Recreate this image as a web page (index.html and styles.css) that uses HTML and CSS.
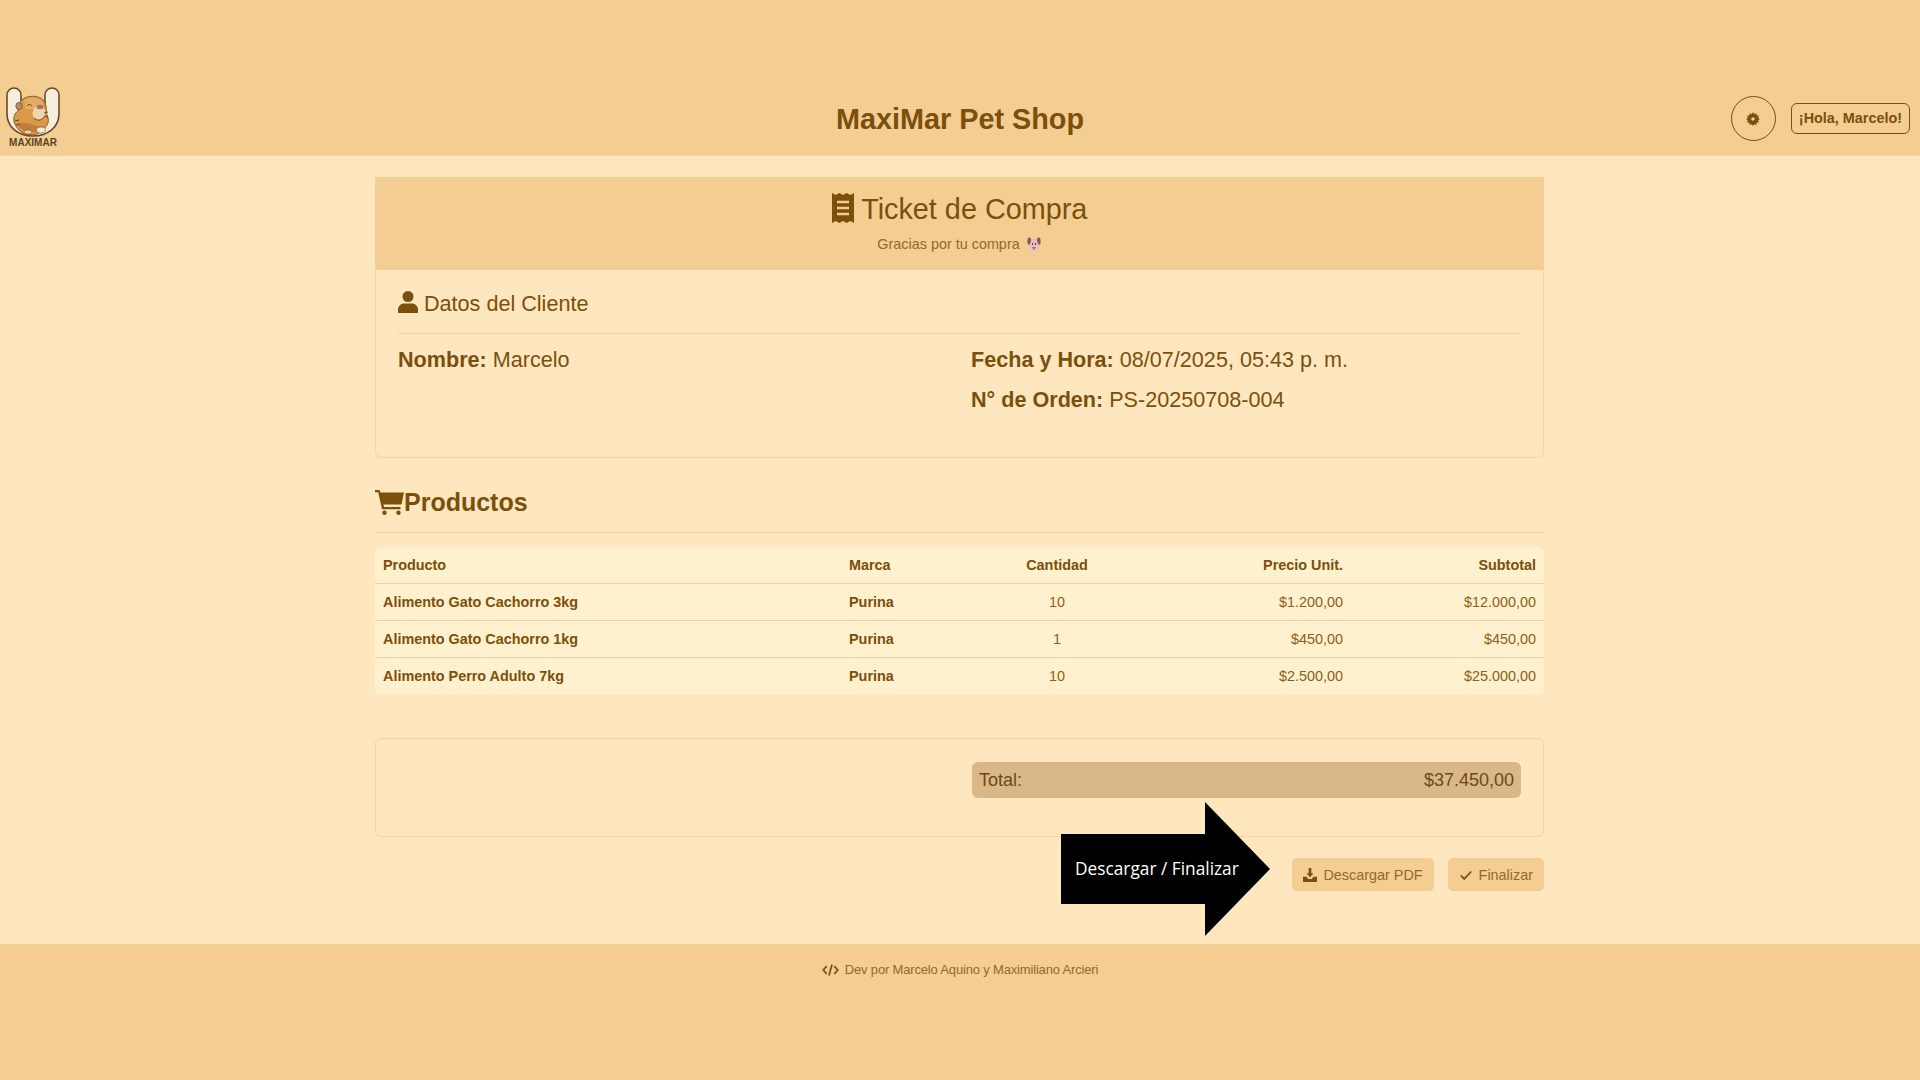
FILE: index.html
```html
<!DOCTYPE html>
<html lang="es">
<head>
  <meta charset="UTF-8" />
  <meta name="viewport" content="width=device-width, initial-scale=1.0"/>
  <title>Ticket de Compra</title>
  <link rel="stylesheet" href="styles.css">
</head>
<body>
  <header class="topbar">
    <div class="brand">
      <svg class="brand-logo" viewBox="0 0 54 51">
        <!-- U -->
        <path d="M1 9a7 7 0 0 1 14 0v14c0 7 5 11 12 11s12-4 12-11V9a7 7 0 0 1 14 0v19c0 13-11 22-26 22S1 41 1 28z" fill="#f7efde" stroke="#6b4a26" stroke-width="1.600"/>
        <!-- capybara -->
        <path d="M8 36c-1-5 1-9 4-11 0-6 2-11 7-13 6-3 14-2 18 2 3 3 4 8 3 13 2 3 3 7 2 10-3 7-10 12-17 12-8 0-14-5-17-13z" fill="#d99a4c" stroke="#7a5424" stroke-width=".9"/>
        <path d="M11 38c3 5 7 8 14 8s10-2 13-6c-4 1-7 0-10-1-6-2-11-3-17-1z" fill="#c0803a"/>
        <path d="M19 13c6-3 12-2 16 1 2 3 3 6 2 9H20c-2-3-2-7-1-10z" fill="#e4ac64"/>
        <ellipse cx="13" cy="20" rx="3.200" ry="3.600" fill="#b98873" stroke="#7a5424" stroke-width=".8"/>
        <ellipse cx="33" cy="27" rx="6.500" ry="7" fill="#f1d3ac"/>
        <ellipse cx="34" cy="21" rx="3.400" ry="2.200" fill="#a7736c"/>
        <path d="M21 20c1-2 3-2 5 0M28 32c3 3 7 3 10-1M9 35l4-1M10 39l4-1M38 27l4-1M38 30l4 1" fill="none" stroke="#5b3a16" stroke-width=".9"/>
        <ellipse cx="35" cy="44" rx="4.500" ry="3" fill="#f6ead6" stroke="#7a5424" stroke-width=".6"/>
        <ellipse cx="22" cy="46" rx="4" ry="2" fill="#edd3aa" stroke="#7a5424" stroke-width=".6"/>
      </svg>
      <span class="brand-name">MAXIMAR</span>
    </div>
    <h1 class="site-title">MaxiMar Pet Shop</h1>
    <div class="topbar-actions">
      <button class="theme-btn" type="button" aria-label="Tema">
        <svg viewBox="0 0 16 16" class="icon-gear">
          <path d="M8 0l1.300 2.300 2.500-.9.4 2.600 2.600.4-.9 2.500L16 8l-2.100 1.300.9 2.500-2.600.4-.4 2.600-2.500-.9L8 16l-1.300-2.100-2.500.9-.4-2.600-2.600-.4.9-2.500L0 8l2.100-1.100-.9-2.500L3.800 4l.4-2.600 2.500.9z"/>
          <circle cx="8" cy="8" r="2" fill="#f3cd92"/>
        </svg>
      </button>
      <div class="greeting">¡Hola, Marcelo!</div>
    </div>
  </header>

  <main class="ticket">
    <section class="ticket-head">
      <h2>
        <svg class="icon-receipt" viewBox="0 0 22 30">
          <path d="M0 0l3.700 2L7.300 0 11 2l3.700-2 3.600 2L22 0v30l-3.700-2-3.600 2L11 28l-3.700 2-3.600-2L0 30z"/>
          <path d="M5 9h12M5 15h12M5 21h12" stroke="#f3cd92" stroke-width="2.400"/>
        </svg>
        Ticket de Compra
      </h2>
      <p>Gracias por tu compra
        <svg class="icon-dog" viewBox="0 0 16 16">
          <path d="M2 2c2-1 3 0 4 1h4c1-1 2-2 4-1 1 3 1 6-1 7 0 4-3 6-5 6s-5-2-5-6C1 8 1 5 2 2z" fill="#e8bfc0"/>
          <path d="M2 2c2-1 3 0 3 2 0 2-1 4-2 5C1 8 1 5 2 2zM14 2c-2-1-3 0-3 2 0 2 1 4 2 5 2-1 2-4 1-7z" fill="#8a5a52"/>
          <path d="M6 7h1v2H6zM9 7h1v2H9z" fill="#5a3a36"/>
          <path d="M6 11h4l-2 3z" fill="#c2556d"/>
        </svg>
      </p>
    </section>

    <section class="client-card">
      <h3 class="client-title">
        <svg class="icon-user" viewBox="0 0 20 22">
          <circle cx="10" cy="5.500" r="5.500"/>
          <path d="M0 22v-3c0-4 3-6.500 6-6.500h8c3 0 6 2.500 6 6.500v3z"/>
        </svg>
        Datos del Cliente
      </h3>
      <div class="client-grid">
        <div>
          <p><strong>Nombre:</strong> Marcelo</p>
        </div>
        <div>
          <p><strong>Fecha y Hora:</strong> 08/07/2025, 05:43 p. m.</p>
          <p><strong>N° de Orden:</strong> PS-20250708-004</p>
        </div>
      </div>
    </section>

    <h3 class="products-title">
      <svg class="icon-cart" viewBox="0 0 29 25">
        <path d="M0 0h4.500l1 2.500H29l-2.500 12H8.500l.5 2.500h16.500v2.200H7L3.200 2.200H0z"/>
        <circle cx="9.500" cy="22.800" r="2.200"/>
        <circle cx="23.500" cy="22.800" r="2.200"/>
      </svg>
      Productos
    </h3>

    <div class="table-wrap">
      <table class="products">
        <thead>
          <tr>
            <th class="col-name">Producto</th>
            <th class="col-brand">Marca</th>
            <th class="col-qty">Cantidad</th>
            <th class="col-price">Precio Unit.</th>
            <th class="col-sub">Subtotal</th>
          </tr>
        </thead>
        <tbody>
          <tr>
            <td class="col-name">Alimento Gato Cachorro 3kg</td>
            <td class="col-brand">Purina</td>
            <td class="col-qty">10</td>
            <td class="col-price">$1.200,00</td>
            <td class="col-sub">$12.000,00</td>
          </tr>
          <tr>
            <td class="col-name">Alimento Gato Cachorro 1kg</td>
            <td class="col-brand">Purina</td>
            <td class="col-qty">1</td>
            <td class="col-price">$450,00</td>
            <td class="col-sub">$450,00</td>
          </tr>
          <tr>
            <td class="col-name">Alimento Perro Adulto 7kg</td>
            <td class="col-brand">Purina</td>
            <td class="col-qty">10</td>
            <td class="col-price">$2.500,00</td>
            <td class="col-sub">$25.000,00</td>
          </tr>
        </tbody>
      </table>
    </div>

    <section class="total-card">
      <div class="total-row">
        <span>Total:</span>
        <span>$37.450,00</span>
      </div>
    </section>

    <div class="actions">
      <button class="btn" type="button">
        <svg class="icon-btn" viewBox="0 0 16 16">
          <path d="M6.500 0h3v6H12L8 10.500 4 6h2.500z"/>
          <path d="M0 10h4l2 2.500h4L12 10h4v6H0z"/>
        </svg>
        Descargar PDF
      </button>
      <button class="btn" type="button">
        <svg class="icon-btn" viewBox="0 0 16 16">
          <path d="M2 8.500l4 4 8-8.500" fill="none" stroke="currentColor" stroke-width="2"/>
        </svg>
        Finalizar
      </button>
    </div>
  </main>

  <footer class="footer">
    <svg class="icon-code" viewBox="0 0 20 14">
      <path d="M5.500 2.500L1.500 7l4 4.500M14.500 2.500l4 4.500-4 4.500M11.800 .5L8.200 13.500" fill="none" stroke="currentColor" stroke-width="2"/>
    </svg>
    Dev por Marcelo Aquino y Maximiliano Arcieri
  </footer>

  <div class="callout">
    <span>Descargar / Finalizar</span>
  </div>
</body>
</html>
```

FILE: styles.css
```css
* {
  box-sizing: border-box;
}

body {
  font-family: 'Liberation Sans', Arial, sans-serif;
  background: #fee7bf;
  margin: 0;
  height: 1080px;
  display: flex;
  flex-direction: column;
  color: #7b4f0c;
  position: relative;
  overflow: hidden;
}

/* top bar */
.topbar {
  height: 156px;
  background: #f3cd92;
  border-bottom: 1px solid #f0d6a8;
  display: flex;
  align-items: flex-end;
  justify-content: space-between;
  padding: 0 10px 7px 6px;
  position: relative;
}

.brand {
  width: 54px;
  display: flex;
  flex-direction: column;
  align-items: center;
}

.brand-logo {
  width: 54px;
  height: 51px;
  display: block;
}

.brand-name {
  font-size: 10px;
  line-height: 10px;
  font-weight: 700;
  color: #5b4426;
  margin-top: 1px;
}

.site-title {
  margin: 0;
  font-size: 28.8px;
  font-weight: 700;
  line-height: 34px;
  position: absolute;
  left: 0;
  right: 0;
  bottom: 19px;
  text-align: center;
  pointer-events: none;
}

.topbar-actions {
  display: flex;
  align-items: center;
  gap: 15px;
  margin-bottom: 7px;
}

.theme-btn {
  width: 45px;
  height: 45px;
  border-radius: 50%;
  border: 1px solid #7b4f0c;
  background: transparent;
  padding: 0;
  display: flex;
  align-items: center;
  justify-content: center;
}

.icon-gear {
  width: 14px;
  height: 14px;
  fill: #7b4f0c;
}

.greeting {
  height: 31px;
  padding: 0 7px;
  border: 1px solid #7b4f0c;
  border-radius: 6px;
  font-size: 14.4px;
  font-weight: 700;
  line-height: 29px;
}

/* ticket */
.ticket {
  width: 1169px;
  margin: 21px auto 0 375px;
  flex: 1;
}

.ticket-head {
  height: 93px;
  background: #f3cd92;
  text-align: center;
  padding-top: 15px;
}

.ticket-head h2 {
  margin: 0;
  font-size: 28.8px;
  font-weight: 400;
  line-height: 34px;
}

.icon-receipt {
  width: 22px;
  height: 30px;
  fill: #7b4f0c;
  vertical-align: -4px;
}

.ticket-head p {
  margin: 9px 0 0;
  font-size: 14.4px;
  line-height: 18px;
  color: #93692b;
}

.icon-dog {
  width: 16px;
  height: 16px;
  vertical-align: -3px;
  margin-left: 2px;
}

.client-card {
  height: 188px;
  border: 1px solid #f1d5a2;
  border-top: none;
  border-radius: 0 0 6px 6px;
  padding: 21px 22px 0;
}

.client-title {
  margin: 0;
  padding-bottom: 17px;
  border-bottom: 1px solid #ecd2a6;
  font-size: 21.6px;
  font-weight: 400;
  line-height: 25px;
}

.icon-user {
  width: 20px;
  height: 22px;
  fill: #7b4f0c;
  vertical-align: -2px;
}

.client-grid {
  display: grid;
  grid-template-columns: 573px 1fr;
  padding-top: 13px;
}

.client-grid p {
  margin: 0 0 15px;
  font-size: 21.6px;
  line-height: 25px;
}

.products-title {
  margin: 27px 0 0;
  padding-bottom: 13px;
  border-bottom: 1px solid #ecd2a6;
  font-size: 25px;
  font-weight: 700;
  line-height: 34px;
  display: flex;
  align-items: center;
}

.icon-cart {
  width: 29px;
  height: 25px;
  fill: #7b4f0c;
}

.table-wrap {
  margin-top: 14px;
  border-radius: 6px;
  overflow: hidden;
}

.products {
  width: 100%;
  border-collapse: collapse;
  table-layout: fixed;
  background: #fff1cd;
  font-size: 14.4px;
}

.products th,
.products td {
  height: 37px;
  padding: 0 8px;
  border-bottom: 1px solid #ecd2a6;
  font-weight: 400;
  color: #8b5f20;
}

.products th {
  height: 36px;
  font-weight: 700;
  color: #7b4f0c;
}

.products tr:last-child td {
  height: 38px;
  border-bottom: none;
}

.col-name {
  width: 466px;
  text-align: left;
}

.products td.col-name,
.products td.col-brand {
  font-weight: 700;
  color: #7b4f0c;
}

.col-brand {
  width: 145px;
  text-align: left;
}

.col-qty {
  width: 142px;
  text-align: center;
}

.col-price {
  width: 223px;
  text-align: right;
}

.col-sub {
  text-align: right;
}

.total-card {
  height: 99px;
  margin-top: 43px;
  padding: 23px 22px 0 596px;
  border: 1px solid #f1d5a2;
  border-radius: 6px;
}

.total-row {
  height: 36px;
  padding: 0 7px 0 7px;
  background: #dab786;
  border-radius: 6px;
  display: flex;
  align-items: center;
  justify-content: space-between;
  font-size: 18px;
  color: #6a4a1a;
}

.actions {
  display: flex;
  justify-content: flex-end;
  gap: 14px;
  margin-top: 21px;
}

.btn {
  height: 33px;
  padding: 0 11px;
  border: none;
  border-radius: 5px;
  background: #f3cd92;
  color: #93692b;
  font-family: inherit;
  font-size: 14.4px;
  display: flex;
  align-items: center;
  gap: 6px;
}

.icon-btn {
  width: 14px;
  height: 14px;
  fill: #7b4f0c;
  color: #7b4f0c;
}

/* footer */
.footer {
  height: 136px;
  background: #f3cd92;
  border-top: 1px solid #ecd0a0;
  padding-top: 16px;
  display: flex;
  justify-content: center;
  gap: 6px;
  font-size: 13px;
  line-height: 18px;
  letter-spacing: -0.17px;
  color: #93692b;
}

.icon-code {
  width: 17px;
  height: 18px;
  color: #7b4f0c;
}

/* annotation arrow laid over the page */
.callout {
  position: absolute;
  left: 1061px;
  top: 802px;
  width: 209px;
  height: 134px;
  background: #000;
  clip-path: polygon(0 32px, 144px 32px, 144px 0, 100% 50%, 144px 100%, 144px 102px, 0 102px);
  color: #fff;
  font-family: 'Open Sans', sans-serif;
  font-size: 17.3px;
  line-height: 24px;
  padding: 55px 0 0 14px;
  white-space: nowrap;
}
```
